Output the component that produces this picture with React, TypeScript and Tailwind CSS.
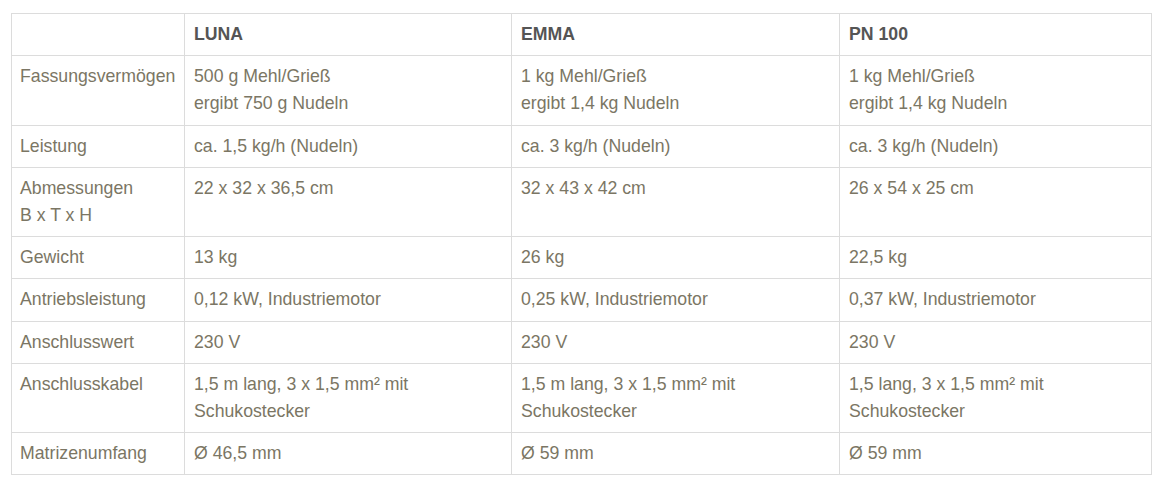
import React from "react";

const rows: [string, string[], string[], string[]][] = [
  ["Fassungsvermögen", ["500 g Mehl/Grieß", "ergibt 750 g Nudeln"], ["1 kg Mehl/Grieß", "ergibt 1,4 kg Nudeln"], ["1 kg Mehl/Grieß", "ergibt 1,4 kg Nudeln"]],
  ["Leistung", ["ca. 1,5 kg/h (Nudeln)"], ["ca. 3 kg/h (Nudeln)"], ["ca. 3 kg/h (Nudeln)"]],
  ["Abmessungen|B x T x H", ["22 x 32 x 36,5 cm"], ["32 x 43 x 42 cm"], ["26 x 54 x 25 cm"]],
  ["Gewicht", ["13 kg"], ["26 kg"], ["22,5 kg"]],
  ["Antriebsleistung", ["0,12 kW, Industriemotor"], ["0,25 kW, Industriemotor"], ["0,37 kW, Industriemotor"]],
  ["Anschlusswert", ["230 V"], ["230 V"], ["230 V"]],
  ["Anschlusskabel", ["1,5 m lang, 3 x 1,5 mm² mit", "Schukostecker"], ["1,5 m lang, 3 x 1,5 mm² mit", "Schukostecker"], ["1,5 lang, 3 x 1,5 mm² mit", "Schukostecker"]],
  ["Matrizenumfang", ["Ø 46,5 mm"], ["Ø 59 mm"], ["Ø 59 mm"]],
];

const td = "border border-[#dcdcdc] px-2 pt-[7px] pb-[7px] align-top";

export default function App() {
  return (
    <div className="w-[1163px] h-[487px] bg-white pt-[13px] pl-[11px]" style={{ fontFamily: '"Liberation Sans", Arial, sans-serif' }}>
      <table className="table-fixed border-collapse w-[1140px] text-[17.7px] leading-[27.2px] text-[#7b7664]">
        <colgroup>
          <col className="w-[173px]" />
          <col className="w-[327px]" />
          <col className="w-[328px]" />
          <col className="w-[312px]" />
        </colgroup>
        <thead>
          <tr>
            <th className={td}></th>
            <th className={`${td} text-left font-bold text-[#555555] pl-[9px]`}>LUNA</th>
            <th className={`${td} text-left font-bold text-[#555555] pl-[9px]`}>EMMA</th>
            <th className={`${td} text-left font-bold text-[#555555] pl-[9px]`}>PN 100</th>
          </tr>
        </thead>
        <tbody>
          {rows.map(([label, a, b, c]) => (
            <tr key={label}>
              <td className={td}>
                {label.split("|").map((l) => (
                  <div key={l}>{l}</div>
                ))}
              </td>
              {[a, b, c].map((cell, i) => (
                <td key={i} className={`${td} pl-[9px]`}>
                  {cell.map((l) => (
                    <div key={l}>{l}</div>
                  ))}
                </td>
              ))}
            </tr>
          ))}
        </tbody>
      </table>
    </div>
  );
}
